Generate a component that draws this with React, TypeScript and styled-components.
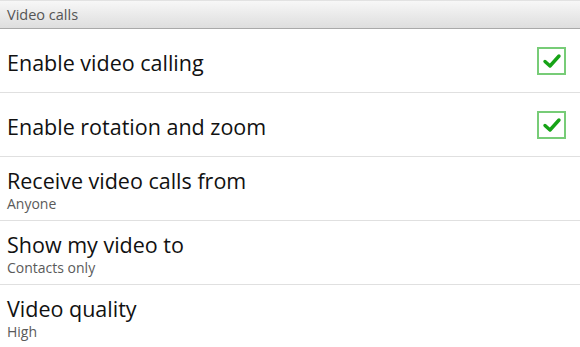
import React from "react";
import styled, { createGlobalStyle } from "styled-components";

const Global = createGlobalStyle`
  html, body {
    margin: 0;
    padding: 0;
    background: #ffffff;
  }
  body {
    font-family: "Open Sans", "DejaVu Sans", sans-serif;
  }
`;

const Screen = styled.div`
  width: 580px;
  height: 347px;
  overflow: hidden;
  display: flex;
  flex-direction: column;
`;

const Header = styled.div`
  height: 27px;
  flex-shrink: 0;
  border-top: 1px solid #e2e2e2;
  border-bottom: 1px solid #a9a9a9;
  background: linear-gradient(#f7f7f7, #dedede);
  display: flex;
  align-items: center;
  padding-left: 7px;
  font-size: 14.5px;
  color: #555555;
`;

const Row = styled.div<{ $single?: boolean }>`
  height: 64px;
  box-sizing: border-box;
  flex-shrink: 0;
  border-bottom: 1px solid #e0e0e0;
  display: flex;
  align-items: center;
  padding: ${p => (p.$single ? "4px 14px 0 7px" : "2px 14px 0 7px")};
  &:last-child {
    border-bottom: none;
  }
`;

const Texts = styled.div`
  flex: 1;
  display: flex;
  flex-direction: column;
`;

const Title = styled.div`
  font-size: 21.5px;
  color: #111111;
  line-height: 28px;
`;

const Summary = styled.div`
  font-size: 14px;
  color: #5a5a5a;
  line-height: 18px;
`;

const Box = styled.div`
  width: 25px;
  height: 24px;
  margin-top: -4px;
  border: 2px solid #77cc77;
  display: flex;
  align-items: center;
  justify-content: center;
`;

const Check = () => (
  <Box>
    <svg width="20" height="18" viewBox="0 0 20 18">
      <path d="M3 9.5 L8 14 L17 4" fill="none" stroke="#16a316" strokeWidth="3.4" strokeLinecap="round" strokeLinejoin="round" />
    </svg>
  </Box>
);

type Item = { title: string; summary?: string; checked?: boolean };

const items: Item[] = [
  { title: "Enable video calling", checked: true },
  { title: "Enable rotation and zoom", checked: true },
  { title: "Receive video calls from", summary: "Anyone" },
  { title: "Show my video to", summary: "Contacts only" },
  { title: "Video quality", summary: "High" },
];

const App = () => {
  return (
    <>
      <Global />
      <Screen>
        <Header>Video calls</Header>
        {items.map(item => (
          <Row key={item.title} $single={!item.summary}>
            <Texts>
              <Title>{item.title}</Title>
              {item.summary && <Summary>{item.summary}</Summary>}
            </Texts>
            {item.checked && <Check />}
          </Row>
        ))}
      </Screen>
    </>
  );
};

export default App;
